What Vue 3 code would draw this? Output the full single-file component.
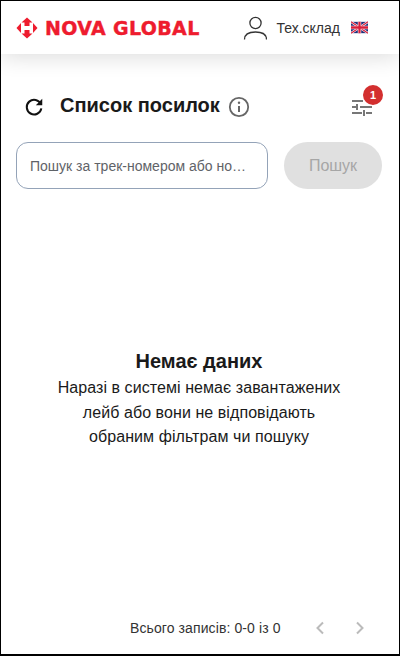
<script setup>
const emptyLines = [
  'Наразі в системі немає завантажених',
  'лейб або вони не відповідають',
  'обраним фільтрам чи пошуку',
]
</script>

<template>
  <div class="page">
    <header class="header">
      <div class="logo">
        <svg class="logo-mark" width="24" height="24" viewBox="0 0 24 24">
          <path d="M12 1.500l5.500 5h-3V10h-5V6.500h-3z" fill="#ee1c2e" />
          <path d="M12 22.500l-5.500-5h3V14h5v3.500h3z" fill="#ee1c2e" />
          <path d="M1.500 12l4.500-5v10z" fill="#ee1c2e" />
          <path d="M22.500 12l-4.500 5V7z" fill="#ee1c2e" />
        </svg>
        <span class="logo-text">NOVA GLOBAL</span>
      </div>
      <div class="user">
        <svg width="24" height="24" viewBox="0 0 24 24" fill="none" stroke="#333" stroke-width="1.3">
          <circle cx="12.500" cy="7" r="5.600" />
          <path d="M1.500 23.500c0-5 4-7.500 11-7.500s11 2.500 11 7.500" />
        </svg>
        <span class="user-name">Тех.склад</span>
        <svg class="flag" width="17" height="13" viewBox="0 0 60 40">
          <rect width="60" height="40" fill="#1f2f7a" />
          <path d="M0 0l60 40M60 0L0 40" stroke="#fff" stroke-width="8" />
          <path d="M0 0l60 40M60 0L0 40" stroke="#d81e3a" stroke-width="4" />
          <path d="M30 0v40M0 20h60" stroke="#fff" stroke-width="12" />
          <path d="M30 0v40M0 20h60" stroke="#d81e3a" stroke-width="8" />
        </svg>
      </div>
    </header>

    <main class="content">
      <div class="title-row">
        <svg class="refresh" width="22" height="22" viewBox="0 0 24 24" fill="none" stroke="#111" stroke-width="2.200">
          <path d="M19.500 9A8 8 0 1 0 20 13.500" />
          <path d="M21 3v7h-7z" fill="#111" stroke="none" />
        </svg>
        <h1 class="title">Список посилок</h1>
        <svg class="info" width="22" height="22" viewBox="0 0 22 22" fill="none">
          <circle cx="11" cy="11" r="9.200" stroke="#666" stroke-width="1.800" />
          <circle cx="11" cy="6.800" r="1.200" fill="#666" />
          <path d="M11 10v6" stroke="#666" stroke-width="2" />
        </svg>
        <button class="filter">
          <svg width="20" height="18" viewBox="0 0 20 18" stroke="#777" stroke-width="2" fill="none">
            <path d="M0 3h11M0 9h4M8 9h12M0 15h10M14 15h6M5 6v6M12 12v6" />
          </svg>
          <span class="badge">1</span>
        </button>
      </div>

      <div class="search">
        <div class="search-input">
          <span class="placeholder">Пошук за трек-номером або но…</span>
        </div>
        <button class="search-btn">Пошук</button>
      </div>

      <section class="empty">
        <h2 class="empty-title">Немає даних</h2>
        <p v-for="line in emptyLines" :key="line" class="empty-line">{{ line }}</p>
      </section>
    </main>

    <footer class="pager">
      <span class="pager-text">Всього записів: 0-0 із 0</span>
      <svg width="12" height="14" viewBox="0 0 12 14" fill="none" stroke="#bbb" stroke-width="2">
        <path d="M9 1.500L3.500 7 9 12.500" />
      </svg>
      <svg width="12" height="14" viewBox="0 0 12 14" fill="none" stroke="#bbb" stroke-width="2">
        <path d="M3 1.500L8.500 7 3 12.500" />
      </svg>
    </footer>
  </div>
</template>

<style scoped>
.page {
  box-sizing: border-box;
  width: 400px;
  height: 656px;
  border: 1px solid #000;
  border-bottom-width: 2px;
  background: #fff;
  display: flex;
  flex-direction: column;
  overflow: hidden;
  font-family: "Liberation Sans", sans-serif;
  color: #1a1a1a;
}
.header {
  flex: none;
  height: 53px;
  display: flex;
  align-items: center;
  justify-content: space-between;
  padding: 0 0 0 14px;
  background: #fff;
  box-shadow: 0 3px 22px rgba(0, 0, 0, 0.14);
  position: relative;
}
.logo {
  display: flex;
  align-items: center;
  gap: 6px;
}
.logo-mark {
  display: block;
}
.logo-text {
  font-family: "DejaVu Sans", sans-serif;
  font-size: 19px;
  font-weight: 700;
  letter-spacing: 0.35px;
  -webkit-text-stroke: 0.4px #ee1c2e;
  color: #ee1c2e;
  white-space: nowrap;
}
.user {
  display: flex;
  align-items: center;
  margin-right: 31px;
}
.user-name {
  font-size: 14px;
  color: #333;
  margin: 0 11px 0 9px;
}
.flag {
  display: block;
}
.content {
  flex: 1;
  display: flex;
  flex-direction: column;
  padding: 0 17px 0 15px;
  min-height: 0;
}
.title-row {
  display: flex;
  align-items: center;
  margin-top: 40px;
  height: 26px;
}
.refresh {
  margin-left: 7px;
}
.title {
  margin: 0 0 3px 15px;
  font-size: 20px;
  font-weight: 700;
  color: #1a1a1a;
  white-space: nowrap;
}
.info {
  margin-left: 8px;
}
.filter {
  position: relative;
  margin-left: auto;
  margin-right: 10px;
  padding: 0;
  border: 0;
  background: none;
  display: flex;
}
.badge {
  position: absolute;
  top: -13px;
  right: -11px;
  width: 20px;
  height: 20px;
  border-radius: 50%;
  background: #d32f2f;
  color: #fff;
  font-size: 11px;
  font-weight: 700;
  line-height: 20px;
  text-align: center;
}
.search {
  display: flex;
  gap: 16px;
  margin-top: 22px;
}
.search-input {
  box-sizing: border-box;
  width: 252px;
  height: 47px;
  padding: 0 13px;
  border: 1px solid #94a3b8;
  border-radius: 12px;
  display: flex;
  align-items: center;
}
.placeholder {
  font-size: 14px;
  color: #5f6368;
  white-space: nowrap;
}
.search-btn {
  width: 98px;
  height: 47px;
  border: 0;
  border-radius: 24px;
  background: #e0e0e0;
  color: #a6a6a6;
  font-family: "Liberation Sans", sans-serif;
  font-size: 16px;
}
.empty {
  margin-top: 160px;
  text-align: center;
}
.empty-title {
  margin: 0 0 3px;
  font-size: 20px;
  font-weight: 700;
  line-height: 24px;
  color: #1a1a1a;
}
.empty-line {
  margin: 0;
  font-size: 16px;
  line-height: 24.500px;
  letter-spacing: 0.07px;
  color: #1a1a1a;
}
.pager {
  flex: none;
  height: 56px;
  padding-top: 3px;
  box-sizing: border-box;
  display: flex;
  align-items: center;
  padding-left: 129px;
  font-size: 14px;
  letter-spacing: 0.1px;
  color: #333;
}
.pager-text {
  width: 184px;
}
.pager svg + svg {
  margin-left: 28px;
}
</style>

<style>
html, body {
  margin: 0;
  background: #fff;
}
</style>
